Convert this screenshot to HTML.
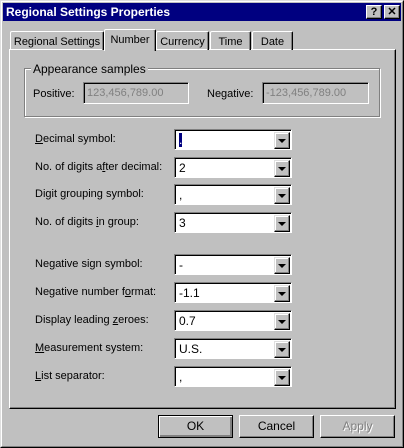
<!DOCTYPE html><html><head><style>
*{box-sizing:border-box;margin:0;padding:0;white-space:nowrap}
body{width:404px;height:448px;background:#c0c0c0;font-family:"Liberation Sans",sans-serif;font-size:11px;color:#000;position:relative;overflow:hidden}
.abs{position:absolute}
.win{left:0;top:0;width:404px;height:448px;border:1px solid;border-color:#dfdfdf #000 #000 #dfdfdf}
.win2{left:1px;top:1px;width:402px;height:446px;border:1px solid;border-color:#fff #808080 #808080 #fff}
.title{left:3px;top:3px;width:398px;height:18px;background:#000080;color:#fff;font-weight:bold;font-size:12px;padding:2px 0 0 3px}
.tb{top:5px;width:16px;height:14px;background:#c0c0c0;border:1px solid;border-color:#fff #000 #000 #fff;box-shadow:inset -1px -1px #808080;font-weight:bold;font-size:11px;text-align:center;line-height:12px;color:#000}
.tab{top:31px;height:19px;border:1px solid;border-bottom:none;border-color:#fff #000 #000 #fff;box-shadow:inset -1px 0 #808080;padding:4px 0 0 0;text-align:center;border-radius:2px 2px 0 0;font-size:11px;overflow:hidden}
.panel{left:9px;top:49px;width:387px;height:360px;border:1px solid;border-color:#fff #000 #000 #fff;box-shadow:inset -1px -1px #808080}
.grp{left:24px;top:68px;width:356px;height:49px;border:1px solid #808080;box-shadow:1px 1px #fff,inset 1px 1px #fff}
.fld{height:22px;border:1px solid;border-color:#808080 #fff #fff #808080;box-shadow:inset 1px 1px #000;color:#808080;padding:4px 0 0 3px}
.cb{left:174px;width:118px;height:21px;background:#fff;border:1px solid;border-color:#808080 #fff #fff #808080;box-shadow:inset 1px 1px #000;padding:3px 0 0 4px;font-size:12px}
.cb i{position:absolute;right:1px;top:2px;width:16px;height:17px;background:#c0c0c0;border:1px solid;border-color:#dfdfdf #000 #000 #dfdfdf;box-shadow:inset -1px -1px #808080,inset 1px 1px #fff}
.cb i:after{content:"";position:absolute;left:3px;top:6px;border-left:4px solid transparent;border-right:4px solid transparent;border-top:4px solid #000}
.lb{left:35px}
.btn{top:415px;width:75px;height:23px;border:1px solid;border-color:#fff #000 #000 #fff;box-shadow:inset -1px -1px #808080;text-align:center;line-height:20px;font-size:12px}
</style></head><body>
<div class="abs win"></div><div class="abs win2"></div>
<div class="abs title">Regional Settings Properties</div>
<div class="abs tb" style="left:366px">?</div>
<div class="abs tb" style="left:384px">✕</div>
<div class="abs panel"></div>
<div class="abs tab" style="left:10px;width:94px">Regional Settings</div>
<div class="abs tab" style="left:156px;width:53px">Currency</div>
<div class="abs tab" style="left:210px;width:41px">Time</div>
<div class="abs tab" style="left:252px;width:41px">Date</div>
<div class="abs tab" style="left:104px;top:29px;height:22px;width:52px;background:#c0c0c0;padding-top:4px">Number</div>
<div class="abs grp"></div>
<div class="abs" style="left:31px;top:62px;background:#c0c0c0;padding:0 2px;font-size:12px">Appearance samples</div>
<div class="abs" style="left:33px;top:88px">Positive:</div>
<div class="abs fld" style="left:83px;top:82px;width:106px">123,456,789.00</div>
<div class="abs" style="left:207px;top:88px">Negative:</div>
<div class="abs fld" style="left:262px;top:82px;width:107px">-123,456,789.00</div>

<div class="abs lb" style="top:133px"><u>D</u>ecimal symbol:</div>
<div class="abs cb" style="top:129px"><span style="background:#000080;color:#fff">.</span><i></i></div>
<div class="abs lb" style="top:161px">No. of digits a<u>f</u>ter decimal:</div>
<div class="abs cb" style="top:157px">2<i></i></div>
<div class="abs lb" style="top:188px">Digit <u>g</u>rouping symbol:</div>
<div class="abs cb" style="top:184px">,<i></i></div>
<div class="abs lb" style="top:216px">No. of digits <u>i</u>n group:</div>
<div class="abs cb" style="top:212px">3<i></i></div>

<div class="abs lb" style="top:258px">Ne<u>g</u>ative sign symbol:</div>
<div class="abs cb" style="top:254px">-<i></i></div>
<div class="abs lb" style="top:286px">Negative number f<u>o</u>rmat:</div>
<div class="abs cb" style="top:282px">-1.1<i></i></div>
<div class="abs lb" style="top:314px">Display leading <u>z</u>eroes:</div>
<div class="abs cb" style="top:310px">0.7<i></i></div>
<div class="abs lb" style="top:342px"><u>M</u>easurement system:</div>
<div class="abs cb" style="top:338px">U.S.<i></i></div>
<div class="abs lb" style="top:370px"><u>L</u>ist separator:</div>
<div class="abs cb" style="top:366px">,<i></i></div>

<div class="abs btn" style="left:158px;border-color:#000;box-shadow:inset 1px 1px #fff,inset -2px -2px #808080">OK</div>
<div class="abs btn" style="left:239px">Cancel</div>
<div class="abs btn" style="left:320px;color:#808080;text-shadow:1px 1px #fff">Apply</div>
</body></html>
